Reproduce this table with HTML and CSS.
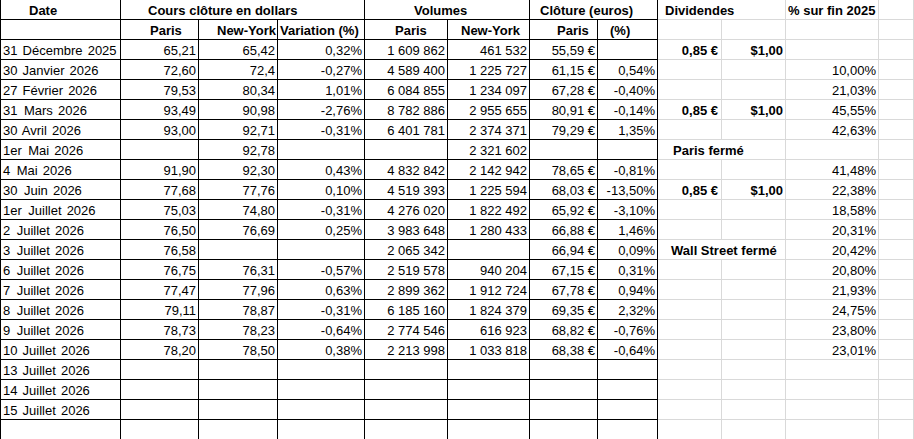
FILE: index.html
```html
<!DOCTYPE html>
<html lang="fr">
<head>
<meta charset="utf-8">
<title>Cours</title>
<link rel="stylesheet" href="styles.css">
</head>
<body>
<div class="sheet">
  <div class="row">
    <div class="c h p-date">Date</div>
    <div class="c h s3 p-cours">Cours clôture en dollars</div>
    <div class="c h s2 p-vol">Volumes</div>
    <div class="c h s2 p-clo">Clôture (euros)</div>
    <div class="c g h s2 p-div">Dividendes</div>
    <div class="c g h p-pct">% sur fin 2025</div>
    <div class="c g"></div>
  </div>
  <div class="row">
    <div class="c"></div>
    <div class="c h p-paris1">Paris</div>
    <div class="c h p-ny1">New-York</div>
    <div class="c h p-var">Variation (%)</div>
    <div class="c h p-paris2">Paris</div>
    <div class="c h p-ny2">New-York</div>
    <div class="c h p-paris3">Paris</div>
    <div class="c h p-pc">(%)</div>
    <div class="c g"></div><div class="c g"></div><div class="c g"></div><div class="c g"></div>
  </div>
  <div class="row">
    <div class="c d">31 Décembre 2025</div>
    <div class="c n">65,21</div><div class="c n">65,42</div><div class="c n">0,32%</div>
    <div class="c n">1&nbsp;609&nbsp;862</div><div class="c n">461&nbsp;532</div>
    <div class="c n">55,59&nbsp;€</div><div class="c n"></div>
    <div class="c g n h e">0,85&nbsp;€</div><div class="c g n h">$1,00</div><div class="c g n"></div><div class="c g"></div>
  </div>
  <div class="row">
    <div class="c d">30 Janvier 2026</div>
    <div class="c n">72,60</div><div class="c n">72,4</div><div class="c n">-0,27%</div>
    <div class="c n">4&nbsp;589&nbsp;400</div><div class="c n">1&nbsp;225&nbsp;727</div>
    <div class="c n">61,15&nbsp;€</div><div class="c n">0,54%</div>
    <div class="c g"></div><div class="c g"></div><div class="c g n">10,00%</div><div class="c g"></div>
  </div>
  <div class="row">
    <div class="c d">27 Février 2026</div>
    <div class="c n">79,53</div><div class="c n">80,34</div><div class="c n">1,01%</div>
    <div class="c n">6&nbsp;084&nbsp;855</div><div class="c n">1&nbsp;234&nbsp;097</div>
    <div class="c n">67,28&nbsp;€</div><div class="c n">-0,40%</div>
    <div class="c g"></div><div class="c g"></div><div class="c g n">21,03%</div><div class="c g"></div>
  </div>
  <div class="row">
    <div class="c d">31&ensp;Mars 2026</div>
    <div class="c n">93,49</div><div class="c n">90,98</div><div class="c n">-2,76%</div>
    <div class="c n">8&nbsp;782&nbsp;886</div><div class="c n">2&nbsp;955&nbsp;655</div>
    <div class="c n">80,91&nbsp;€</div><div class="c n">-0,14%</div>
    <div class="c g n h e">0,85&nbsp;€</div><div class="c g n h">$1,00</div><div class="c g n">45,55%</div><div class="c g"></div>
  </div>
  <div class="row">
    <div class="c d">30 Avril 2026</div>
    <div class="c n">93,00</div><div class="c n">92,71</div><div class="c n">-0,31%</div>
    <div class="c n">6&nbsp;401&nbsp;781</div><div class="c n">2&nbsp;374&nbsp;371</div>
    <div class="c n">79,29&nbsp;€</div><div class="c n">1,35%</div>
    <div class="c g"></div><div class="c g"></div><div class="c g n">42,63%</div><div class="c g"></div>
  </div>
  <div class="row">
    <div class="c d">1er&ensp;Mai 2026</div>
    <div class="c n"></div><div class="c n">92,78</div><div class="c n"></div>
    <div class="c n"></div><div class="c n">2&nbsp;321&nbsp;602</div>
    <div class="c n"></div><div class="c n"></div>
    <div class="c g h s2 p-pf">Paris fermé</div><div class="c g"></div><div class="c g"></div>
  </div>
  <div class="row">
    <div class="c d">4&ensp;Mai 2026</div>
    <div class="c n">91,90</div><div class="c n">92,30</div><div class="c n">0,43%</div>
    <div class="c n">4&nbsp;832&nbsp;842</div><div class="c n">2&nbsp;142&nbsp;942</div>
    <div class="c n">78,65&nbsp;€</div><div class="c n">-0,81%</div>
    <div class="c g"></div><div class="c g"></div><div class="c g n">41,48%</div><div class="c g"></div>
  </div>
  <div class="row">
    <div class="c d">30&ensp;Juin 2026</div>
    <div class="c n">77,68</div><div class="c n">77,76</div><div class="c n">0,10%</div>
    <div class="c n">4&nbsp;519&nbsp;393</div><div class="c n">1&nbsp;225&nbsp;594</div>
    <div class="c n">68,03&nbsp;€</div><div class="c n">-13,50%</div>
    <div class="c g n h e">0,85&nbsp;€</div><div class="c g n h">$1,00</div><div class="c g n">22,38%</div><div class="c g"></div>
  </div>
  <div class="row">
    <div class="c d">1er&ensp;Juillet 2026</div>
    <div class="c n">75,03</div><div class="c n">74,80</div><div class="c n">-0,31%</div>
    <div class="c n">4&nbsp;276&nbsp;020</div><div class="c n">1&nbsp;822&nbsp;492</div>
    <div class="c n">65,92&nbsp;€</div><div class="c n">-3,10%</div>
    <div class="c g"></div><div class="c g"></div><div class="c g n">18,58%</div><div class="c g"></div>
  </div>
  <div class="row">
    <div class="c d">2&ensp;Juillet 2026</div>
    <div class="c n">76,50</div><div class="c n">76,69</div><div class="c n">0,25%</div>
    <div class="c n">3&nbsp;983&nbsp;648</div><div class="c n">1&nbsp;280&nbsp;433</div>
    <div class="c n">66,88&nbsp;€</div><div class="c n">1,46%</div>
    <div class="c g"></div><div class="c g"></div><div class="c g n">20,31%</div><div class="c g"></div>
  </div>
  <div class="row">
    <div class="c d">3&ensp;Juillet 2026</div>
    <div class="c n">76,58</div><div class="c n"></div><div class="c n"></div>
    <div class="c n">2&nbsp;065&nbsp;342</div><div class="c n"></div>
    <div class="c n">66,94&nbsp;€</div><div class="c n">0,09%</div>
    <div class="c g h s2 p-ws">Wall Street fermé</div><div class="c g n">20,42%</div><div class="c g"></div>
  </div>
  <div class="row">
    <div class="c d">6&ensp;Juillet 2026</div>
    <div class="c n">76,75</div><div class="c n">76,31</div><div class="c n">-0,57%</div>
    <div class="c n">2&nbsp;519&nbsp;578</div><div class="c n">940&nbsp;204</div>
    <div class="c n">67,15&nbsp;€</div><div class="c n">0,31%</div>
    <div class="c g"></div><div class="c g"></div><div class="c g n">20,80%</div><div class="c g"></div>
  </div>
  <div class="row">
    <div class="c d">7&ensp;Juillet 2026</div>
    <div class="c n">77,47</div><div class="c n">77,96</div><div class="c n">0,63%</div>
    <div class="c n">2&nbsp;899&nbsp;362</div><div class="c n">1&nbsp;912&nbsp;724</div>
    <div class="c n">67,78&nbsp;€</div><div class="c n">0,94%</div>
    <div class="c g"></div><div class="c g"></div><div class="c g n">21,93%</div><div class="c g"></div>
  </div>
  <div class="row">
    <div class="c d">8&ensp;Juillet 2026</div>
    <div class="c n">79,11</div><div class="c n">78,87</div><div class="c n">-0,31%</div>
    <div class="c n">6&nbsp;185&nbsp;160</div><div class="c n">1&nbsp;824&nbsp;379</div>
    <div class="c n">69,35&nbsp;€</div><div class="c n">2,32%</div>
    <div class="c g"></div><div class="c g"></div><div class="c g n">24,75%</div><div class="c g"></div>
  </div>
  <div class="row">
    <div class="c d">9&ensp;Juillet 2026</div>
    <div class="c n">78,73</div><div class="c n">78,23</div><div class="c n">-0,64%</div>
    <div class="c n">2&nbsp;774&nbsp;546</div><div class="c n">616&nbsp;923</div>
    <div class="c n">68,82&nbsp;€</div><div class="c n">-0,76%</div>
    <div class="c g"></div><div class="c g"></div><div class="c g n">23,80%</div><div class="c g"></div>
  </div>
  <div class="row">
    <div class="c d">10 Juillet 2026</div>
    <div class="c n">78,20</div><div class="c n">78,50</div><div class="c n">0,38%</div>
    <div class="c n">2&nbsp;213&nbsp;998</div><div class="c n">1&nbsp;033&nbsp;818</div>
    <div class="c n">68,38&nbsp;€</div><div class="c n">-0,64%</div>
    <div class="c g"></div><div class="c g"></div><div class="c g n">23,01%</div><div class="c g"></div>
  </div>
  <div class="row">
    <div class="c d">13 Juillet 2026</div>
    <div class="c"></div><div class="c"></div><div class="c"></div><div class="c"></div><div class="c"></div><div class="c"></div><div class="c"></div>
    <div class="c g"></div><div class="c g"></div><div class="c g"></div><div class="c g"></div>
  </div>
  <div class="row">
    <div class="c d">14 Juillet 2026</div>
    <div class="c"></div><div class="c"></div><div class="c"></div><div class="c"></div><div class="c"></div><div class="c"></div><div class="c"></div>
    <div class="c g"></div><div class="c g"></div><div class="c g"></div><div class="c g"></div>
  </div>
  <div class="row">
    <div class="c d">15 Juillet 2026</div>
    <div class="c"></div><div class="c"></div><div class="c"></div><div class="c"></div><div class="c"></div><div class="c"></div><div class="c"></div>
    <div class="c g"></div><div class="c g"></div><div class="c g"></div><div class="c g"></div>
  </div>
  <div class="row">
    <div class="c"></div>
    <div class="c"></div><div class="c"></div><div class="c"></div><div class="c"></div><div class="c"></div><div class="c"></div><div class="c"></div>
    <div class="c g"></div><div class="c g"></div><div class="c g"></div><div class="c g"></div>
  </div>
</div>
</body>
</html>
```
FILE: styles.css
```css
html, body {
  margin: 0;
  padding: 0;
  background: #ffffff;
}

body {
  font-family: "Liberation Sans", Arial, sans-serif;
  font-size: 13px;
  color: #000000;
  overflow: hidden;
}

.sheet {
  width: 913px;
  border-left: 1px solid #000000;
}

.row {
  display: grid;
  grid-template-columns: 120px 78px 79px 87px 83px 82px 68px 60px 64px 64px 93px 1fr;
  height: 20px;
}

.c {
  box-sizing: border-box;
  height: 20px;
  border-right: 1px solid #000000;
  border-bottom: 1px solid #000000;
  padding: 1px 2px 0 2px;
  line-height: 19px;
  white-space: nowrap;
}

.d { word-spacing: 1.5px; }
.n { text-align: right; }
.e { padding-right: 3px; }
.g { border-color: #d9d9d9; }
.h { font-weight: bold; }
.s2 { grid-column: span 2; }
.s3 { grid-column: span 3; }

.p-date { padding-left: 28px; }
.p-cours { padding-left: 27px; }
.p-vol { padding-left: 49px; }
.p-clo { padding-left: 10px; }
.p-div { padding-left: 7px; }
.p-pct { padding-left: 2px; }
.p-paris1 { padding-left: 29px; }
.p-ny1 { padding-left: 18px; }
.p-var { padding-left: 2px; }
.p-paris2 { padding-left: 30px; }
.p-ny2 { padding-left: 13px; }
.p-paris3 { padding-left: 27px; }
.p-pc { padding-left: 12px; }
.p-pf { padding-left: 15px; }
.p-ws { padding-left: 13px; }
```
